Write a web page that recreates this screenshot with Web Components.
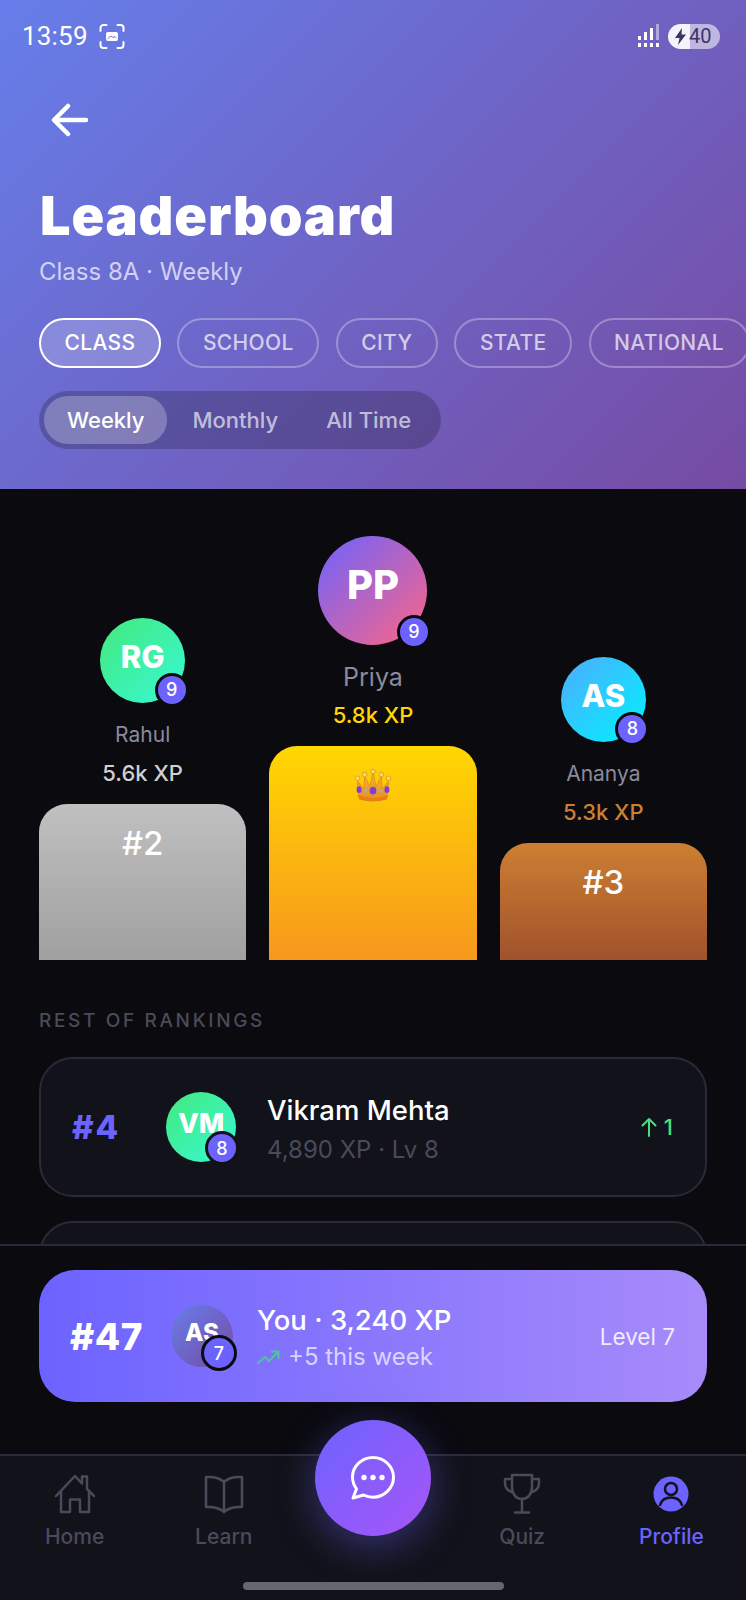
<!DOCTYPE html>
<html>
<head>
<meta charset="utf-8">
<title>Leaderboard</title>
<style>
    html, body { margin: 0; padding: 0; background: #0a0a0f; }
    body { font-family: Inter, "Liberation Sans", sans-serif; }
    lb-app { width: 746px; height: 1600px; }
</style>
</head>
<body>
<lb-app>
    <lb-header slot="header" title="Leaderboard" sub="Class 8A · Weekly"></lb-header>
    <lb-podium slot="main">
        <lb-podium-col initials="RG" level="9" name="Rahul" xp="5.6k XP" rank="#2" tier="silver"></lb-podium-col>
        <lb-podium-col initials="PP" level="9" name="Priya" xp="5.8k XP" tier="gold"></lb-podium-col>
        <lb-podium-col initials="AS" level="8" name="Ananya" xp="5.3k XP" rank="#3" tier="bronze"></lb-podium-col>
    </lb-podium>
    <lb-rankings slot="main">
        <lb-rank-row rank="#4" initials="VM" level="8" name="Vikram Mehta" sub="4,890 XP · Lv 8" delta="1"></lb-rank-row>
        <lb-rank-row></lb-rank-row>
    </lb-rankings>
    <lb-my-rank slot="mine" rank="#47" initials="AS" level="7" title="You · 3,240 XP" sub="+5 this week" tag="Level 7"></lb-my-rank>
    <lb-nav slot="nav"></lb-nav>
</lb-app>

<script>
const appTemplate = document.createElement('template');
appTemplate.innerHTML = `
    <style>
        :host { display: flex; flex-direction: column; overflow: hidden; position: relative; background: #0a0a0f; color: #fff; }
        .main { flex: 1; min-height: 0; overflow: hidden; padding: 0 39px; }
    </style>
    <slot name="header"></slot>
    <div class="main"><slot name="main"></slot></div>
    <slot name="mine"></slot>
    <slot name="nav"></slot>
`;

class LbApp extends HTMLElement {
    constructor() {
        super();
        this.attachShadow({mode: 'open'}).appendChild(appTemplate.content.cloneNode(true));
    }
}

const avatarColors = {
    RG: 'linear-gradient(135deg, #43e97b, #38f9d7)',
    VM: 'linear-gradient(135deg, #43e97b, #38f9d7)',
    PP: 'linear-gradient(135deg, #6c63ff, #ff6584)',
    AS: 'linear-gradient(135deg, #4facfe, #00f2fe)',
    ME: 'linear-gradient(135deg, #667eea, #764ba2)'
};

class LbAvatar extends HTMLElement {
    constructor() {
        super();
        this.attachShadow({mode: 'open'});
    }

    connectedCallback() {
        const size = +this.getAttribute('size');
        const badge = +this.getAttribute('badge');
        const font = +this.getAttribute('font');
        const edge = this.getAttribute('edge') || '#0a0a0f';
        const off = +(this.getAttribute('off') || -3.5);
        const bg = avatarColors[this.getAttribute('tone') || this.getAttribute('initials')];
        this.shadowRoot.innerHTML = `
            <style>
                :host { display: block; position: relative; width: ${size}px; height: ${size}px; flex: none; }
                .disc {
                    width: 100%; height: 100%; box-sizing: border-box; padding-bottom: ${Math.round(font * 0.3)}px;
                    border-radius: 50%; background: ${bg};
                    display: flex; align-items: center; justify-content: center;
                    font-size: ${font}px; font-weight: 800; color: #fff;
                }
                .lvl {
                    position: absolute; right: ${off}px; bottom: ${off}px;
                    width: ${badge}px; height: ${badge}px; box-sizing: border-box;
                    border-radius: 50%; border: 3px solid ${edge}; background: #6c63ff;
                    display: flex; align-items: center; justify-content: center;
                    font-size: 18px; font-weight: 500; color: #fff;
                }
            </style>
            <div class="disc">${this.getAttribute('initials')}</div>
            <div class="lvl">${this.getAttribute('level')}</div>
        `;
    }
}

const headerTemplate = document.createElement('template');
headerTemplate.innerHTML = `
    <style>
        :host {
            display: block; height: 489px; box-sizing: border-box; overflow: hidden;
            background: linear-gradient(135deg, #667eea 0%, #764ba2 100%);
        }
        .status { height: 72px; display: flex; align-items: center; padding: 0 26px 0 22px; }
        .time { font-family: Roboto, sans-serif; font-size: 26px; font-weight: 400; color: #fff; letter-spacing: 0.2px; }
        .shot { margin-left: 11px; }
        .spacer { flex: 1; }
        .batt {
            position: relative; width: 52px; height: 25px; margin-left: 8px; border-radius: 13px; overflow: hidden;
            background: linear-gradient(90deg, #f4f2fb 0 22px, rgba(255,255,255,.55) 22px);
            display: flex; align-items: center; color: #3d3560; font-family: Roboto, sans-serif; font-size: 20px;
        }
        .batt svg { margin-left: 6px; margin-right: 2px; }
        .back { display: block; margin: 31px 0 0 51px; }
        .wrap { padding: 0 0 0 39px; }
        h1 {
            margin: 48px 0 0 1px; font-family: Inter, sans-serif; font-size: 54px; line-height: 62px; font-weight: 900;
            letter-spacing: 0.85px; color: #fff;
        }
        .sub { margin-top: 9px; font-size: 24px; line-height: 32px; color: rgba(255,255,255,.7); }
        .chips { display: flex; gap: 16.500px; margin-top: 30px; white-space: nowrap; }
        .seg {
            display: inline-flex; gap: 2px; margin-top: 23px; padding: 5px 7px 5px 5px; border-radius: 29px;
            background: rgba(0,0,0,.2);
        }
        .seg span {
            padding: 0 23px; height: 48px; line-height: 48px; border-radius: 24px;
            font-size: 22px; font-weight: 500; color: rgba(255,255,255,.65);
        }
        .seg .on { background: rgba(255,255,255,.25); color: #fff; }
    </style>
    <div class="status">
        <span class="time">13:59</span>
        <svg class="shot" width="26" height="25" viewBox="0 0 26 25" fill="none" stroke="#fff" stroke-width="2" stroke-linecap="round">
            <path d="M1.5 7V4a3 3 0 0 1 3-3h3M18.500 1h3a3 3 0 0 1 3 3v3M1.500 18v3a3 3 0 0 0 3 3h3M18.500 24h3a3 3 0 0 0 3-3v-3"/>
            <rect x="7" y="8" width="12" height="9" rx="2" fill="#fff" stroke="none"/>
            <path d="M9 14.500l3-2.500 2 1.500 2-1 1 1" stroke="#6d78dc" stroke-width="1"/>
        </svg>
        <span class="spacer"></span>
        <svg width="22" height="24" viewBox="0 0 22 24" fill="#fff">
            <rect x="0" y="12" width="3" height="4"/><rect x="6" y="8" width="3" height="8"/><rect x="12" y="4" width="3" height="12"/><rect x="18" y="0" width="3" height="16" opacity=".45"/>
            <rect x="0" y="19" width="3" height="4"/><rect x="6" y="19" width="3" height="4"/><rect x="12" y="19" width="3" height="4"/><rect x="18" y="19" width="3" height="4"/>
        </svg>
        <div class="batt">
            <svg width="13" height="17" viewBox="0 0 13 17" fill="#3d3560"><path d="M8 0 1 10h4.500L4 17l8-10.500H7.500z"/></svg>
            <span>40</span>
        </div>
    </div>
    <svg class="back" width="38" height="34" viewBox="0 0 38 34" fill="none" stroke="#fff" stroke-width="4.500" stroke-linecap="round" stroke-linejoin="round">
        <path d="M35 17H4M17 3 3 17l14 14"/>
    </svg>
    <div class="wrap">
        <h1></h1>
        <div class="sub"></div>
        <div class="chips">
            <lb-chip active>CLASS</lb-chip>
            <lb-chip>SCHOOL</lb-chip>
            <lb-chip>CITY</lb-chip>
            <lb-chip>STATE</lb-chip>
            <lb-chip>NATIONAL</lb-chip>
        </div>
        <div class="seg"><span class="on">Weekly</span><span>Monthly</span><span>All Time</span></div>
    </div>
`;

class LbHeader extends HTMLElement {
    constructor() {
        super();
        this.attachShadow({mode: 'open'}).appendChild(headerTemplate.content.cloneNode(true));
    }

    connectedCallback() {
        this.shadowRoot.querySelector('h1').textContent = this.getAttribute('title');
        this.shadowRoot.querySelector('.sub').textContent = this.getAttribute('sub');
    }
}

const chipTemplate = document.createElement('template');
chipTemplate.innerHTML = `
    <style>
        :host {
            display: block; flex: none; height: 50px; box-sizing: border-box; padding: 0 23.500px; border-radius: 25px;
            border: 2px solid rgba(255,255,255,.3); line-height: 46px;
            font-size: 21px; font-weight: 500; letter-spacing: 0.35px; color: rgba(255,255,255,.7);
        }
        :host([active]) { border-color: #fff; background: rgba(255,255,255,.2); color: #fff; }
    </style>
    <slot></slot>
`;

class LbChip extends HTMLElement {
    constructor() {
        super();
        this.attachShadow({mode: 'open'}).appendChild(chipTemplate.content.cloneNode(true));
    }
}

const podiumTemplate = document.createElement('template');
podiumTemplate.innerHTML = `
    <style>
        :host { display: flex; align-items: flex-end; gap: 23px; padding-top: 47px; }
    </style>
    <slot></slot>
`;

class LbPodium extends HTMLElement {
    constructor() {
        super();
        this.attachShadow({mode: 'open'}).appendChild(podiumTemplate.content.cloneNode(true));
    }
}

const tiers = {
    gold: { size: 109, badge: 34, font: 40, nameSize: 25, bar: 214, xp: '#ffd700', bg: 'linear-gradient(180deg, #ffd700, #f7971e)', nameColor: '#8a8a9e' },
    silver: { size: 85, badge: 34, font: 31, nameSize: 21, bar: 156, xp: '#d0d0d0', bg: 'linear-gradient(180deg, #c0c0c0, #a0a0a0)', nameColor: '#8a8a9e' },
    bronze: { size: 85, badge: 34, font: 31, nameSize: 21, bar: 117, xp: '#cd7f32', bg: 'linear-gradient(180deg, #cd7f32, #a0522d)', nameColor: '#8a8a9e' }
};

class LbPodiumCol extends HTMLElement {
    constructor() {
        super();
        this.attachShadow({mode: 'open'});
    }

    connectedCallback() {
        const t = tiers[this.getAttribute('tier')];
        const rank = this.getAttribute('rank');
        const top = rank
            ? `<span class="rank">${rank}</span>`
            : `<svg class="crown" width="40" height="33" viewBox="0 0 38 32">
                    <defs><linearGradient id="cg" x1="0" y1="0" x2="0" y2="1"><stop offset="0" stop-color="#f6b42c"/><stop offset="1" stop-color="#ec9020"/></linearGradient></defs>
                    <path d="M4 12 10 19 11 7 16 17 19 3 22 17 27 7 28 19 34 12 33 27Q19 32 5 27Z" fill="url(#cg)" stroke="#d9861c" stroke-width=".7" stroke-linejoin="round"/>
                    <path d="M5 25.500Q19 30.500 33 25.500L32.500 29.500Q19 33.500 5.500 29.500Z" fill="#e67f14"/>
                    <g fill="#fbd879" stroke="#d98b1e" stroke-width=".7"><circle cx="4" cy="9" r="2.200"/><circle cx="11" cy="5.500" r="2.200"/><circle cx="19" cy="2.500" r="2.200"/><circle cx="27" cy="5.500" r="2.200"/><circle cx="34" cy="9" r="2.200"/></g>
                    <g fill="#7f3fd6"><ellipse cx="5.500" cy="20" rx="2.400" ry="3.200"/><ellipse cx="19" cy="21" rx="3.200" ry="3.700"/><ellipse cx="32.500" cy="20" rx="2.400" ry="3.200"/></g>
                    <g fill="#a9a6c0"><circle cx="12" cy="21" r="1.800"/><circle cx="26" cy="21" r="1.800"/></g>
                </svg>`;
        this.shadowRoot.innerHTML = `
            <style>
                :host { display: flex; flex-direction: column; align-items: center; flex: 1 1 0; min-width: 0; }
                .name { margin-top: 17px; line-height: 30px; font-size: ${t.nameSize}px; color: ${t.nameColor}; }
                .xp { margin-top: 8px; line-height: 30px; font-size: 22px; font-weight: 500; color: ${t.xp}; }
                .bar {
                    align-self: stretch; margin-top: 16px; height: ${t.bar}px; background: ${t.bg};
                    border-radius: 28px 28px 0 0; display: flex; justify-content: center; padding-top: 19px; box-sizing: border-box;
                }
                .rank { font-size: 33px; line-height: 40px; font-weight: 500; color: #fff; }
                .crown { margin-top: 4px; }
            </style>
            <lb-avatar initials="${this.getAttribute('initials')}" level="${this.getAttribute('level')}"
                size="${t.size}" badge="${t.badge}" font="${t.font}"></lb-avatar>
            <div class="name">${this.getAttribute('name')}</div>
            <div class="xp">${this.getAttribute('xp')}</div>
            <div class="bar">${top}</div>
        `;
    }
}

const rankingsTemplate = document.createElement('template');
rankingsTemplate.innerHTML = `
    <style>
        :host { display: block; }
        .label {
            margin-top: 48px; line-height: 26px; height: 49px;
            font-size: 19px; font-weight: 500; letter-spacing: 2.650px; color: #4a4a5a;
        }
        .list { display: flex; flex-direction: column; gap: 24px; }
    </style>
    <div class="label">REST OF RANKINGS</div>
    <div class="list"><slot></slot></div>
`;

class LbRankings extends HTMLElement {
    constructor() {
        super();
        this.attachShadow({mode: 'open'}).appendChild(rankingsTemplate.content.cloneNode(true));
    }
}

class LbRankRow extends HTMLElement {
    constructor() {
        super();
        this.attachShadow({mode: 'open'});
    }

    connectedCallback() {
        const css = `
            :host {
                display: flex; align-items: center; height: 140px; box-sizing: border-box; flex: none;
                padding: 0 32px 0 31px; background: #12121a; border: 2px solid #2a2a3a; border-radius: 34px;
            }
            .rank { width: 94px; font-size: 33px; font-weight: 800; letter-spacing: 2px; color: #6c63ff; }
            .info { flex: 1; margin-left: 31px; padding-top: 3px; }
            .name { font-size: 27.500px; line-height: 36px; font-weight: 500; color: #fff; }
            .sub { margin-top: 6px; font-size: 24px; line-height: 32px; color: #4a4a5a; }
            .delta { display: flex; align-items: center; gap: 7px; font-size: 22px; font-weight: 500; color: #4ade80; }
        `;
        if (!this.hasAttribute('rank')) {
            this.shadowRoot.innerHTML = `<style>${css}</style>`;
            return;
        }
        this.shadowRoot.innerHTML = `
            <style>${css}</style>
            <div class="rank">${this.getAttribute('rank')}</div>
            <lb-avatar initials="${this.getAttribute('initials')}" level="${this.getAttribute('level')}"
                size="70" badge="34" font="27" off="-3" edge="#12121a"></lb-avatar>
            <div class="info">
                <div class="name">${this.getAttribute('name')}</div>
                <div class="sub">${this.getAttribute('sub')}</div>
            </div>
            <div class="delta">
                <svg width="16" height="20" viewBox="0 0 16 20" fill="none" stroke="#4ade80" stroke-width="2" stroke-linecap="round" stroke-linejoin="round"><path d="M8 19V2M1.500 8.500 8 2l6.500 6.500"/></svg>
                <span>${this.getAttribute('delta')}</span>
            </div>
        `;
    }
}

class LbMyRank extends HTMLElement {
    constructor() {
        super();
        this.attachShadow({mode: 'open'});
    }

    connectedCallback() {
        this.shadowRoot.innerHTML = `
            <style>
                :host {
                    display: block; flex: none; position: relative; z-index: 1; height: 210px; box-sizing: border-box;
                    padding: 24px 39px 0; background: #0a0a0f; border-top: 2px solid #2a2a3a;
                }
                .card {
                    display: flex; align-items: center; height: 132px; box-sizing: border-box; padding: 0 32px 0 31px;
                    border-radius: 36px; background: linear-gradient(90deg, #6c63ff, #a78bfa);
                }
                .rank { width: 101px; font-size: 37px; font-weight: 800; letter-spacing: 0.5px; color: #fff; }
                .info { flex: 1; margin-left: 24px; padding-top: 3px; }
                .title { font-size: 27.500px; line-height: 36px; font-weight: 500; color: #fff; }
                .sub {
                    display: flex; align-items: center; gap: 8px; margin-top: 3px;
                    font-size: 24px; line-height: 32px; color: rgba(255,255,255,.7);
                }
                .tag { font-size: 22.500px; font-weight: 400; color: rgba(255,255,255,.85); }
            </style>
            <div class="card">
                <div class="rank">${this.getAttribute('rank')}</div>
                <lb-avatar initials="${this.getAttribute('initials')}" tone="ME" level="${this.getAttribute('level')}"
                    size="62" badge="36" font="24" off="-4" edge="#0a0a0f"></lb-avatar>
                <div class="info">
                    <div class="title">${this.getAttribute('title')}</div>
                    <div class="sub">
                        <svg width="23" height="15" viewBox="0 0 23 15" fill="none" stroke="#4fc3a1" stroke-width="2" stroke-linecap="round" stroke-linejoin="round"><path d="M1 13l7-6 4 4 9-9M15 1.500h6.500V8"/></svg>
                        <span>${this.getAttribute('sub')}</span>
                    </div>
                </div>
                <div class="tag">${this.getAttribute('tag')}</div>
            </div>
        `;
    }
}

const navTemplate = document.createElement('template');
navTemplate.innerHTML = `
    <style>
        :host {
            display: block; flex: none; position: relative; z-index: 2; height: 146px; box-sizing: border-box;
            background: #12121a; border-top: 2px solid #2a2a3a;
        }
        .items { display: grid; grid-template-columns: repeat(5, 1fr); padding-top: 17px; }
        .item { display: flex; flex-direction: column; align-items: center; height: 82px; color: #4a4a5a; font-size: 21px; font-weight: 500; }
        .item svg { display: block; height: 42px; flex: none; }
        .item span { margin-top: 8px; line-height: 28px; }
        .item.on { color: #6c63ff; }
        .fab {
            position: absolute; left: 315px; top: -36px; width: 116px; height: 116px; border-radius: 50%;
            background: linear-gradient(135deg, #6c63ff, #a855f7);
            box-shadow: 0 10px 40px rgba(108, 99, 255, .4);
            display: flex; align-items: center; justify-content: center;
        }
        .home {
            position: absolute; left: 243px; bottom: 10px; width: 261px; height: 8px; border-radius: 4px; background: #66666e;
        }
    </style>
    <div class="items">
        <div class="item">
            <svg width="42" viewBox="0 0 42 42" fill="none" stroke="currentColor" stroke-width="2.500" stroke-linejoin="round" stroke-linecap="round">
                <path d="M2 23 21 3 28 10.500V3.500h5V16l7 7"/>
                <path d="M7 18.500V39h9V26.500h10V39h9V18.500"/>
            </svg>
            <span>Home</span>
        </div>
        <div class="item">
            <svg width="42" viewBox="0 0 42 42" fill="none" stroke="currentColor" stroke-width="2.500" stroke-linejoin="round" stroke-linecap="round">
                <path d="M21 9C17 5 10 3.500 3 4V34c7-.5 13 .5 18 5 5-4.500 11-5.500 18-5V4C32 3.500 25 5 21 9ZM21 9v30"/>
            </svg>
            <span>Learn</span>
        </div>
        <div class="item"></div>
        <div class="item">
            <svg width="42" viewBox="0 0 42 42" fill="none" stroke="currentColor" stroke-width="2.500" stroke-linejoin="round" stroke-linecap="round">
                <path d="M11 2h20v12c0 7-4 12-10 12S11 21 11 14Z"/>
                <path d="M11 6H4v4c0 5 3 8 8 9.500M31 6h7v4c0 5-3 8-8 9.500M21 26v13M14 39.500h14"/>
            </svg>
            <span>Quiz</span>
        </div>
        <div class="item on">
            <svg width="42" viewBox="0 0 42 42">
                <circle cx="21" cy="21" r="17.500" fill="#6c63ff"/>
                <circle cx="21" cy="16" r="6" fill="none" stroke="#12121a" stroke-width="2.500"/>
                <path d="M10 32c1.500-5 5.500-7.500 11-7.500S30.500 27 32 32" fill="none" stroke="#12121a" stroke-width="2.500" stroke-linecap="round"/>
            </svg>
            <span>Profile</span>
        </div>
    </div>
    <div class="fab">
        <svg width="46" height="46" viewBox="0 0 46 46" fill="none">
            <path d="M23 2.500C12 2.500 2.500 11 2.500 22c0 4.500 1.500 8.500 4 12L3 43l10.500-3c3 1.500 6 2.300 9.500 2.300 11 0 20.500-9 20.500-20S34 2.500 23 2.500Z" stroke="#fff" stroke-width="3" stroke-linejoin="round"/>
            <circle cx="14" cy="22.500" r="2.700" fill="#fff"/><circle cx="23" cy="22.500" r="2.700" fill="#fff"/><circle cx="32" cy="22.500" r="2.700" fill="#fff"/>
        </svg>
    </div>
    <div class="home"></div>
`;

class LbNav extends HTMLElement {
    constructor() {
        super();
        this.attachShadow({mode: 'open'}).appendChild(navTemplate.content.cloneNode(true));
    }
}

customElements.define('lb-app', LbApp);
customElements.define('lb-avatar', LbAvatar);
customElements.define('lb-chip', LbChip);
customElements.define('lb-header', LbHeader);
customElements.define('lb-podium', LbPodium);
customElements.define('lb-podium-col', LbPodiumCol);
customElements.define('lb-rankings', LbRankings);
customElements.define('lb-rank-row', LbRankRow);
customElements.define('lb-my-rank', LbMyRank);
customElements.define('lb-nav', LbNav);
</script>
</body>
</html>
